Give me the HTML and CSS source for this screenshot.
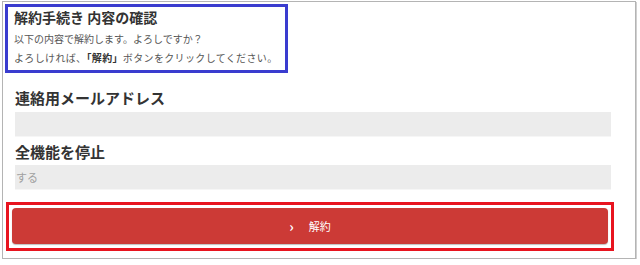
FILE: index.html
```html
<!DOCTYPE html>
<html lang="ja">
<head>
    <meta charset="UTF-8">
    <meta name="viewport" content="width=device-width, initial-scale=1.0">
    <title>解約手続き 内容の確認</title>
    <link rel="stylesheet" href="styles.css">
</head>
<body>
    <div class="panel">
        <section class="intro">
            <h1>解約手続き 内容の確認</h1>
            <p>以下の内容で解約します。よろしですか？</p>
            <p>よろしければ、<strong>「解約」</strong>ボタンをクリックしてください。</p>
        </section>
        <form class="fields">
            <div class="form-group">
                <label for="email">連絡用メールアドレス</label>
                <div class="field" id="email"></div>
            </div>
            <div class="form-group">
                <label for="stop">全機能を停止</label>
                <div class="field" id="stop">する</div>
            </div>
        </form>
        <div class="submit-area">
            <button type="submit"><span class="chev">›</span>解約</button>
        </div>
    </div>
</body>
</html>
```

FILE: styles.css
```css
body {
    font-family: "Noto Sans CJK JP", "Noto Sans", sans-serif;
    margin: 0;
    padding: 0;
    background-color: #ffffff;
    color: #333;
}

.panel {
    box-sizing: border-box;
    width: 634px;
    height: 258px;
    margin: 1px 0 0 2px;
    border: 1px solid #b4b4b4;
    box-shadow: 1px 1px 0 #d0d0d0;
}

.intro {
    box-sizing: border-box;
    width: 283px;
    margin: 2px 0 0 2px;
    padding: 1px 4px 3px 6px;
    border: 3px solid #3a3ccf;
}

.intro h1 {
    margin: 0;
    font-size: 14px;
    line-height: 19px;
    font-weight: bold;
    color: #333;
}

.intro p {
    margin: 0;
    font-size: 10px;
    line-height: 19px;
    color: #555;
    white-space: nowrap;
}

.intro p:first-of-type {
    margin-top: 2px;
}

.intro p + p {
    letter-spacing: 0.35px;
}

.intro strong {
    color: #333;
}

.fields {
    margin: 15px 24px 0 12px;
}

.form-group + .form-group {
    margin-top: 5px;
}

.form-group label {
    display: block;
    font-size: 15px;
    line-height: 20px;
    font-weight: bold;
    color: #333;
    margin-bottom: 3.5px;
}

.field {
    box-sizing: border-box;
    height: 25px;
    padding: 0 1px;
    background-color: #ececec;
    border-bottom: 1px solid #f6f6f6;
    font-size: 11px;
    line-height: 24px;
    color: #a0a0a0;
}

.submit-area {
    margin: 12px 21px 0 3px;
    padding: 3px 3px 4px 3px;
    border: 3px solid #e8141f;
}

button {
    display: flex;
    align-items: center;
    justify-content: center;
    width: 100%;
    height: 36px;
    background-color: #cc3a36;
    color: white;
    border: none;
    border-radius: 4px;
    box-shadow: 0 1px 1px rgba(0, 0, 0, 0.25);
    font-family: inherit;
    font-size: 11px;
    cursor: pointer;
}

button .chev {
    font-size: 14px;
    font-weight: bold;
    margin-right: 15px;
    line-height: 1;
}
```
